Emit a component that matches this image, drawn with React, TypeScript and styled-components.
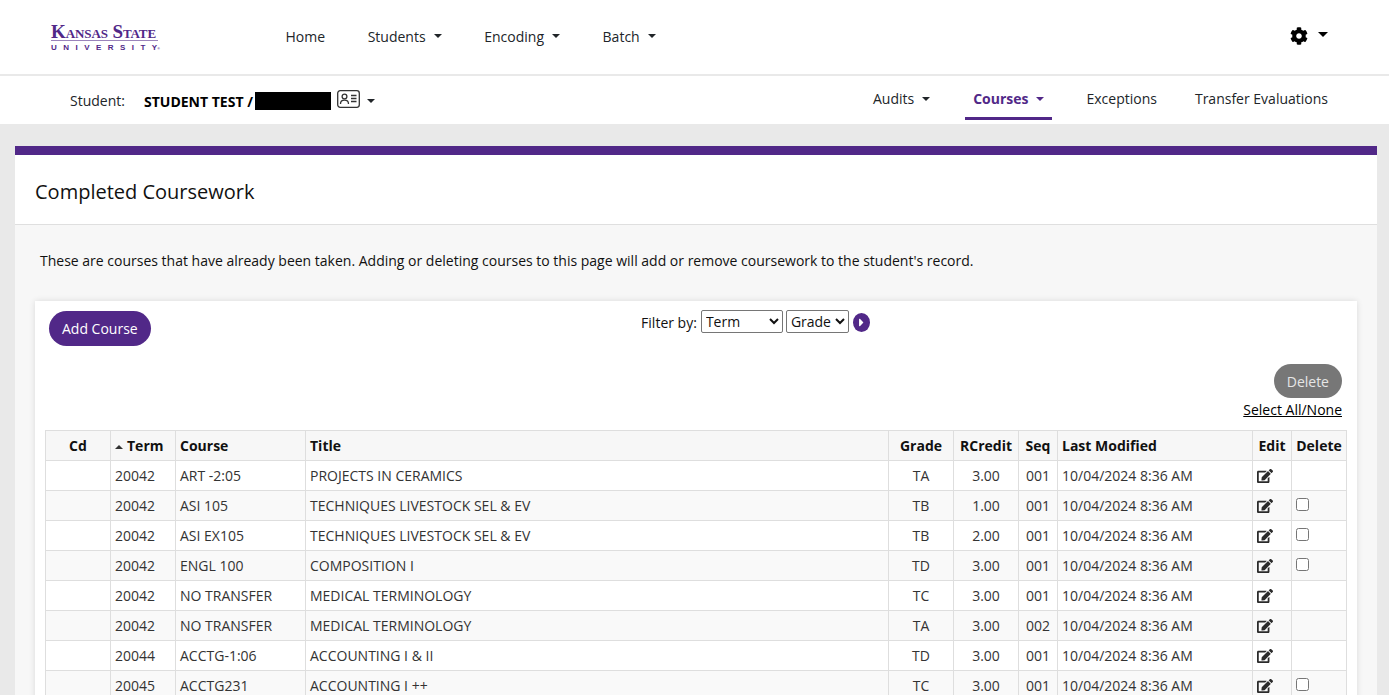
import React from "react";
import styled, { createGlobalStyle } from "styled-components";
import { FaCog, FaEdit, FaCaretRight } from "react-icons/fa";

const purple = "#512888";

const Global = createGlobalStyle`
  html, body { margin: 0; padding: 0; height: 100%; overflow: hidden; }
  body { background: #e9e9e9; font-family: "Open Sans", sans-serif; font-size: 14px; color: #212529; }
  #root { height: 100%; overflow: hidden; }
`;

const TopBar = styled.header`
  background: #fff;
  border-bottom: 2px solid #e9e9e9;
  display: flex;
  align-items: center;
  padding: 0 61px 2px 50px;
  height: 72px;
`;
const Logo = styled.div`
  width: 110px;
  color: ${purple};
  font-family: "Liberation Serif", serif;
  line-height: 1;
  margin-top: 5px;
  padding-left: 1px;
  box-sizing: border-box;
`;
const LogoTop = styled.div`
  font-size: 19px;
  font-weight: 700;
  font-variant: small-caps;
  white-space: nowrap;
  border-bottom: 1px solid #9a83bb;
  width: 107px;
  letter-spacing: -0.1px;
  line-height: 17px;
`;
const LogoBottom = styled.div`
  font-family: "Liberation Sans", sans-serif;
  font-size: 8px;
  font-weight: 700;
  letter-spacing: 6.45px;
  margin-top: 2px;
  white-space: nowrap;
  line-height: 9px;
`;
const Registered = styled.span`
  font-size: 3px;
  letter-spacing: 0;
  margin-left: -6px;
`;
const MainNav = styled.nav`
  display: flex;
  margin-left: 125.5px;
  gap: 42.6px;
  flex: 1;
`;
const NavLink = styled.span<{ $active?: boolean }>`
  color: ${p => (p.$active ? purple : "#212529")};
  font-weight: ${p => (p.$active ? 700 : 400)};
  white-space: nowrap;
  display: inline-flex;
  align-items: center;
`;
const Caret = styled.i`
  display: inline-block;
  width: 0;
  height: 0;
  margin-left: 8px;
  border-top: 4.5px solid currentColor;
  border-left: 4.5px solid transparent;
  border-right: 4.5px solid transparent;
`;
const Settings = styled.div`
  display: flex;
  align-items: center;
  color: #000;
  font-size: 18px;
  svg { display: block; }
  ${Caret} {
    margin: -4px 0 0 10px;
    border-top-width: 5px;
    border-left-width: 5px;
    border-right-width: 5px;
  }
`;
const SubBar = styled.div`
  height: 48px;
  background: #fff;
  display: flex;
  align-items: center;
  padding: 0 53px 0 70px;
`;
const StudentLabel = styled.span`
  width: 74px;
`;
const StudentName = styled.b`
  color: #000;
  font-weight: 700;
  white-space: nowrap;
  margin-top: 2px;
`;
const Redacted = styled.span`
  width: 76px;
  height: 18px;
  background: #000;
  margin: 2px 0 0 2px;
`;
const CardIcon = styled.svg`
  margin: -3px 0 0 6px;
  width: 23px;
  height: 18px;
  display: block;
`;
const StudentCaret = styled(NavLink)`
  margin-top: 2px;
  ${Caret} { margin-left: 7px; }
`;
const SubNav = styled.nav`
  margin-left: auto;
  display: flex;
  height: 48px;
  align-items: stretch;
`;
const SubLink = styled(NavLink) <{ $active?: boolean; $extra?: number }>`
  padding: 4px 8px 0;
  margin-left: 22px;
  margin-right: ${p => p.$extra || 0}px;
  border-bottom: 3px solid ${p => (p.$active ? purple : "transparent")};
  height: 44px;
  box-sizing: border-box;
`;
const Panel = styled.main`
  margin: 22px 12px 0 15px;
  border-top: 9px solid ${purple};
  background: #f7f7f7;
`;
const PanelHead = styled.div`
  background: #fff;
  border-bottom: 1px solid #dfdfdf;
  display: flex;
  align-items: center;
  padding: 4px 0 0 20px;
  font-size: 20px;
  color: #111;
  box-sizing: border-box;
  height: 70px;
`;
const Intro = styled.p`
  margin: 0;
  padding: 26px 25px 0;
  height: 50px;
  line-height: 20px;
  color: #111;
`;
const Sheet = styled.section`
  background: #fff;
  margin: 0 20px;
  box-shadow: 0 0 6px rgba(0, 0, 0, 0.12);
  padding: 10px 10px 30px;
`;
const ToolRow = styled.div`
  display: grid;
  grid-template-columns: 1fr auto 1fr;
  padding: 0 5px 0 4px;
  height: 53px;
  align-items: start;
`;
const Pill = styled.button<{ $muted?: boolean }>`
  height: ${p => (p.$muted ? 34 : 35)}px;
  padding: 0 13px;
  border: 0;
  border-radius: 18px;
  background: ${p => (p.$muted ? "#777" : purple)};
  color: ${p => (p.$muted ? "#e6e6e6" : "#fff")};
  font: inherit;
  justify-self: start;
`;
const Filter = styled.div`
  display: flex;
  align-items: center;
  gap: 3px;
  margin: 1px 0 0 120px;
  color: #111;
`;
const FilterLabel = styled.span`
  margin-right: 1px;
`;
const Select = styled.select<{ $w: number }>`
  width: ${p => p.$w}px;
  height: 23px;
  margin-top: -2px;
  font: inherit;
  background: #fff;
  color: #111;
  border: 1px solid #767676;
  border-radius: 2px;
  padding: 0;
`;
const GoButton = styled.span`
  width: 17px;
  height: 19px;
  margin-left: 1px;
  border-radius: 50%;
  background: ${purple};
  color: #fff;
  display: flex;
  align-items: center;
  justify-content: center;
  font-size: 13px;
`;
const Actions = styled.div`
  display: flex;
  flex-direction: column;
  align-items: flex-end;
  padding-right: 5px;
  height: 66px;
  gap: 2px;
`;
const SelectAll = styled.a`
  color: #000;
  text-decoration: underline;
  line-height: 20px;
`;
const Table = styled.table`
  width: 1301px;
  table-layout: fixed;
  border-collapse: collapse;
  color: #333;
`;
const Th = styled.th<{ $align?: string }>`
  height: 30px;
  box-sizing: border-box;
  background: #f7f7f7;
  border: 1px solid #dedede;
  padding: 0 4px;
  color: #111;
  font-weight: 700;
  text-align: ${p => p.$align || "left"};
  white-space: nowrap;
`;
const Td = styled.td<{ $align?: string }>`
  height: 30px;
  box-sizing: border-box;
  border: 1px solid #dedede;
  padding: 0 4px;
  text-align: ${p => p.$align || "left"};
  white-space: nowrap;
`;
const Row = styled.tr<{ $odd: boolean }>`
  background: ${p => (p.$odd ? "#fff" : "#f9f9f9")};
`;
const SortUp = styled.i`
  display: inline-block;
  width: 0;
  height: 0;
  margin-right: 4px;
  vertical-align: 2px;
  border-bottom: 4.5px solid #333;
  border-left: 4.5px solid transparent;
  border-right: 4.5px solid transparent;
`;
const EditIcon = styled(FaEdit)`
  display: block;
  color: #2b2b2b;
  font-size: 16px;
  margin-top: 1px;
`;
const Check = styled.input`
  display: block;
  width: 13px;
  height: 13px;
  margin: -3px 0 0 0;
`;

const rows: [string, string, string, string, string, string, boolean][] = [
  ["20042", "ART -2:05", "PROJECTS IN CERAMICS", "TA", "3.00", "001", false],
  ["20042", "ASI 105", "TECHNIQUES LIVESTOCK SEL & EV", "TB", "1.00", "001", true],
  ["20042", "ASI EX105", "TECHNIQUES LIVESTOCK SEL & EV", "TB", "2.00", "001", true],
  ["20042", "ENGL 100", "COMPOSITION I", "TD", "3.00", "001", true],
  ["20042", "NO TRANSFER", "MEDICAL TERMINOLOGY", "TC", "3.00", "001", false],
  ["20042", "NO TRANSFER", "MEDICAL TERMINOLOGY", "TA", "3.00", "002", false],
  ["20044", "ACCTG-1:06", "ACCOUNTING I & II", "TD", "3.00", "001", false],
  ["20045", "ACCTG231", "ACCOUNTING I ++", "TC", "3.00", "001", true],
];
const widths = [65, 65, 130, 583, 65, 65, 39, 195, 39, 55];

export default function App() {
  return (
    <>
      <Global />
      <TopBar>
        <Logo>
          <LogoTop>Kansas State</LogoTop>
          <LogoBottom>UNIVERSITY<Registered>®</Registered></LogoBottom>
        </Logo>
        <MainNav>
          <NavLink>Home</NavLink>
          <NavLink>Students<Caret /></NavLink>
          <NavLink>Encoding<Caret /></NavLink>
          <NavLink>Batch<Caret /></NavLink>
        </MainNav>
        <Settings><FaCog /><Caret /></Settings>
      </TopBar>
      <SubBar>
        <StudentLabel>Student:</StudentLabel>
        <StudentName>STUDENT TEST /</StudentName>
        <Redacted />
        <CardIcon viewBox="0 0 23 18" fill="none" stroke="#333" strokeWidth="1.3">
          <rect x="0.7" y="0.7" width="21.6" height="16.6" rx="2.5" />
          <circle cx="7.5" cy="6.5" r="2.4" />
          <path d="M3.5 14c0-2.6 1.8-3.8 4-3.8s4 1.2 4 3.8" />
          <path d="M14 5.5h5.5M14 8.5h5.5M14 11.5h5.5" />
        </CardIcon>
        <StudentCaret><Caret /></StudentCaret>
        <SubNav>
          <SubLink $extra={5}>Audits<Caret /></SubLink>
          <SubLink $active $extra={4}>Courses<Caret /></SubLink>
          <SubLink>Exceptions</SubLink>
          <SubLink>Transfer Evaluations</SubLink>
        </SubNav>
      </SubBar>
      <Panel>
        <PanelHead>Completed Coursework</PanelHead>
        <Intro>These are courses that have already been taken. Adding or deleting courses to this page will add or remove coursework to the student's record.</Intro>
        <Sheet>
          <ToolRow>
            <Pill>Add Course</Pill>
            <Filter>
              <FilterLabel>Filter by:</FilterLabel>
              <Select $w={82} defaultValue="Term"><option>Term</option></Select>
              <Select $w={63} defaultValue="Grade"><option>Grade</option></Select>
              <GoButton><FaCaretRight /></GoButton>
            </Filter>
          </ToolRow>
          <Actions>
            <Pill $muted>Delete</Pill>
            <SelectAll>Select All/None</SelectAll>
          </Actions>
          <Table>
            <colgroup>
              {widths.map((w, i) => <col key={i} style={{ width: w }} />)}
            </colgroup>
            <thead>
              <tr>
                <Th $align="center">Cd</Th>
                <Th><SortUp />Term</Th>
                <Th>Course</Th>
                <Th>Title</Th>
                <Th $align="center">Grade</Th>
                <Th $align="center">RCredit</Th>
                <Th $align="center">Seq</Th>
                <Th>Last Modified</Th>
                <Th $align="center">Edit</Th>
                <Th $align="center">Delete</Th>
              </tr>
            </thead>
            <tbody>
              {rows.map((r, i) => (
                <Row key={i} $odd={i % 2 === 0}>
                  <Td />
                  <Td>{r[0]}</Td>
                  <Td>{r[1]}</Td>
                  <Td>{r[2]}</Td>
                  <Td $align="center">{r[3]}</Td>
                  <Td $align="center">{r[4]}</Td>
                  <Td $align="center">{r[5]}</Td>
                  <Td>10/04/2024 8:36 AM</Td>
                  <Td><EditIcon /></Td>
                  <Td>{r[6] && <Check type="checkbox" />}</Td>
                </Row>
              ))}
            </tbody>
          </Table>
        </Sheet>
      </Panel>
    </>
  );
}
